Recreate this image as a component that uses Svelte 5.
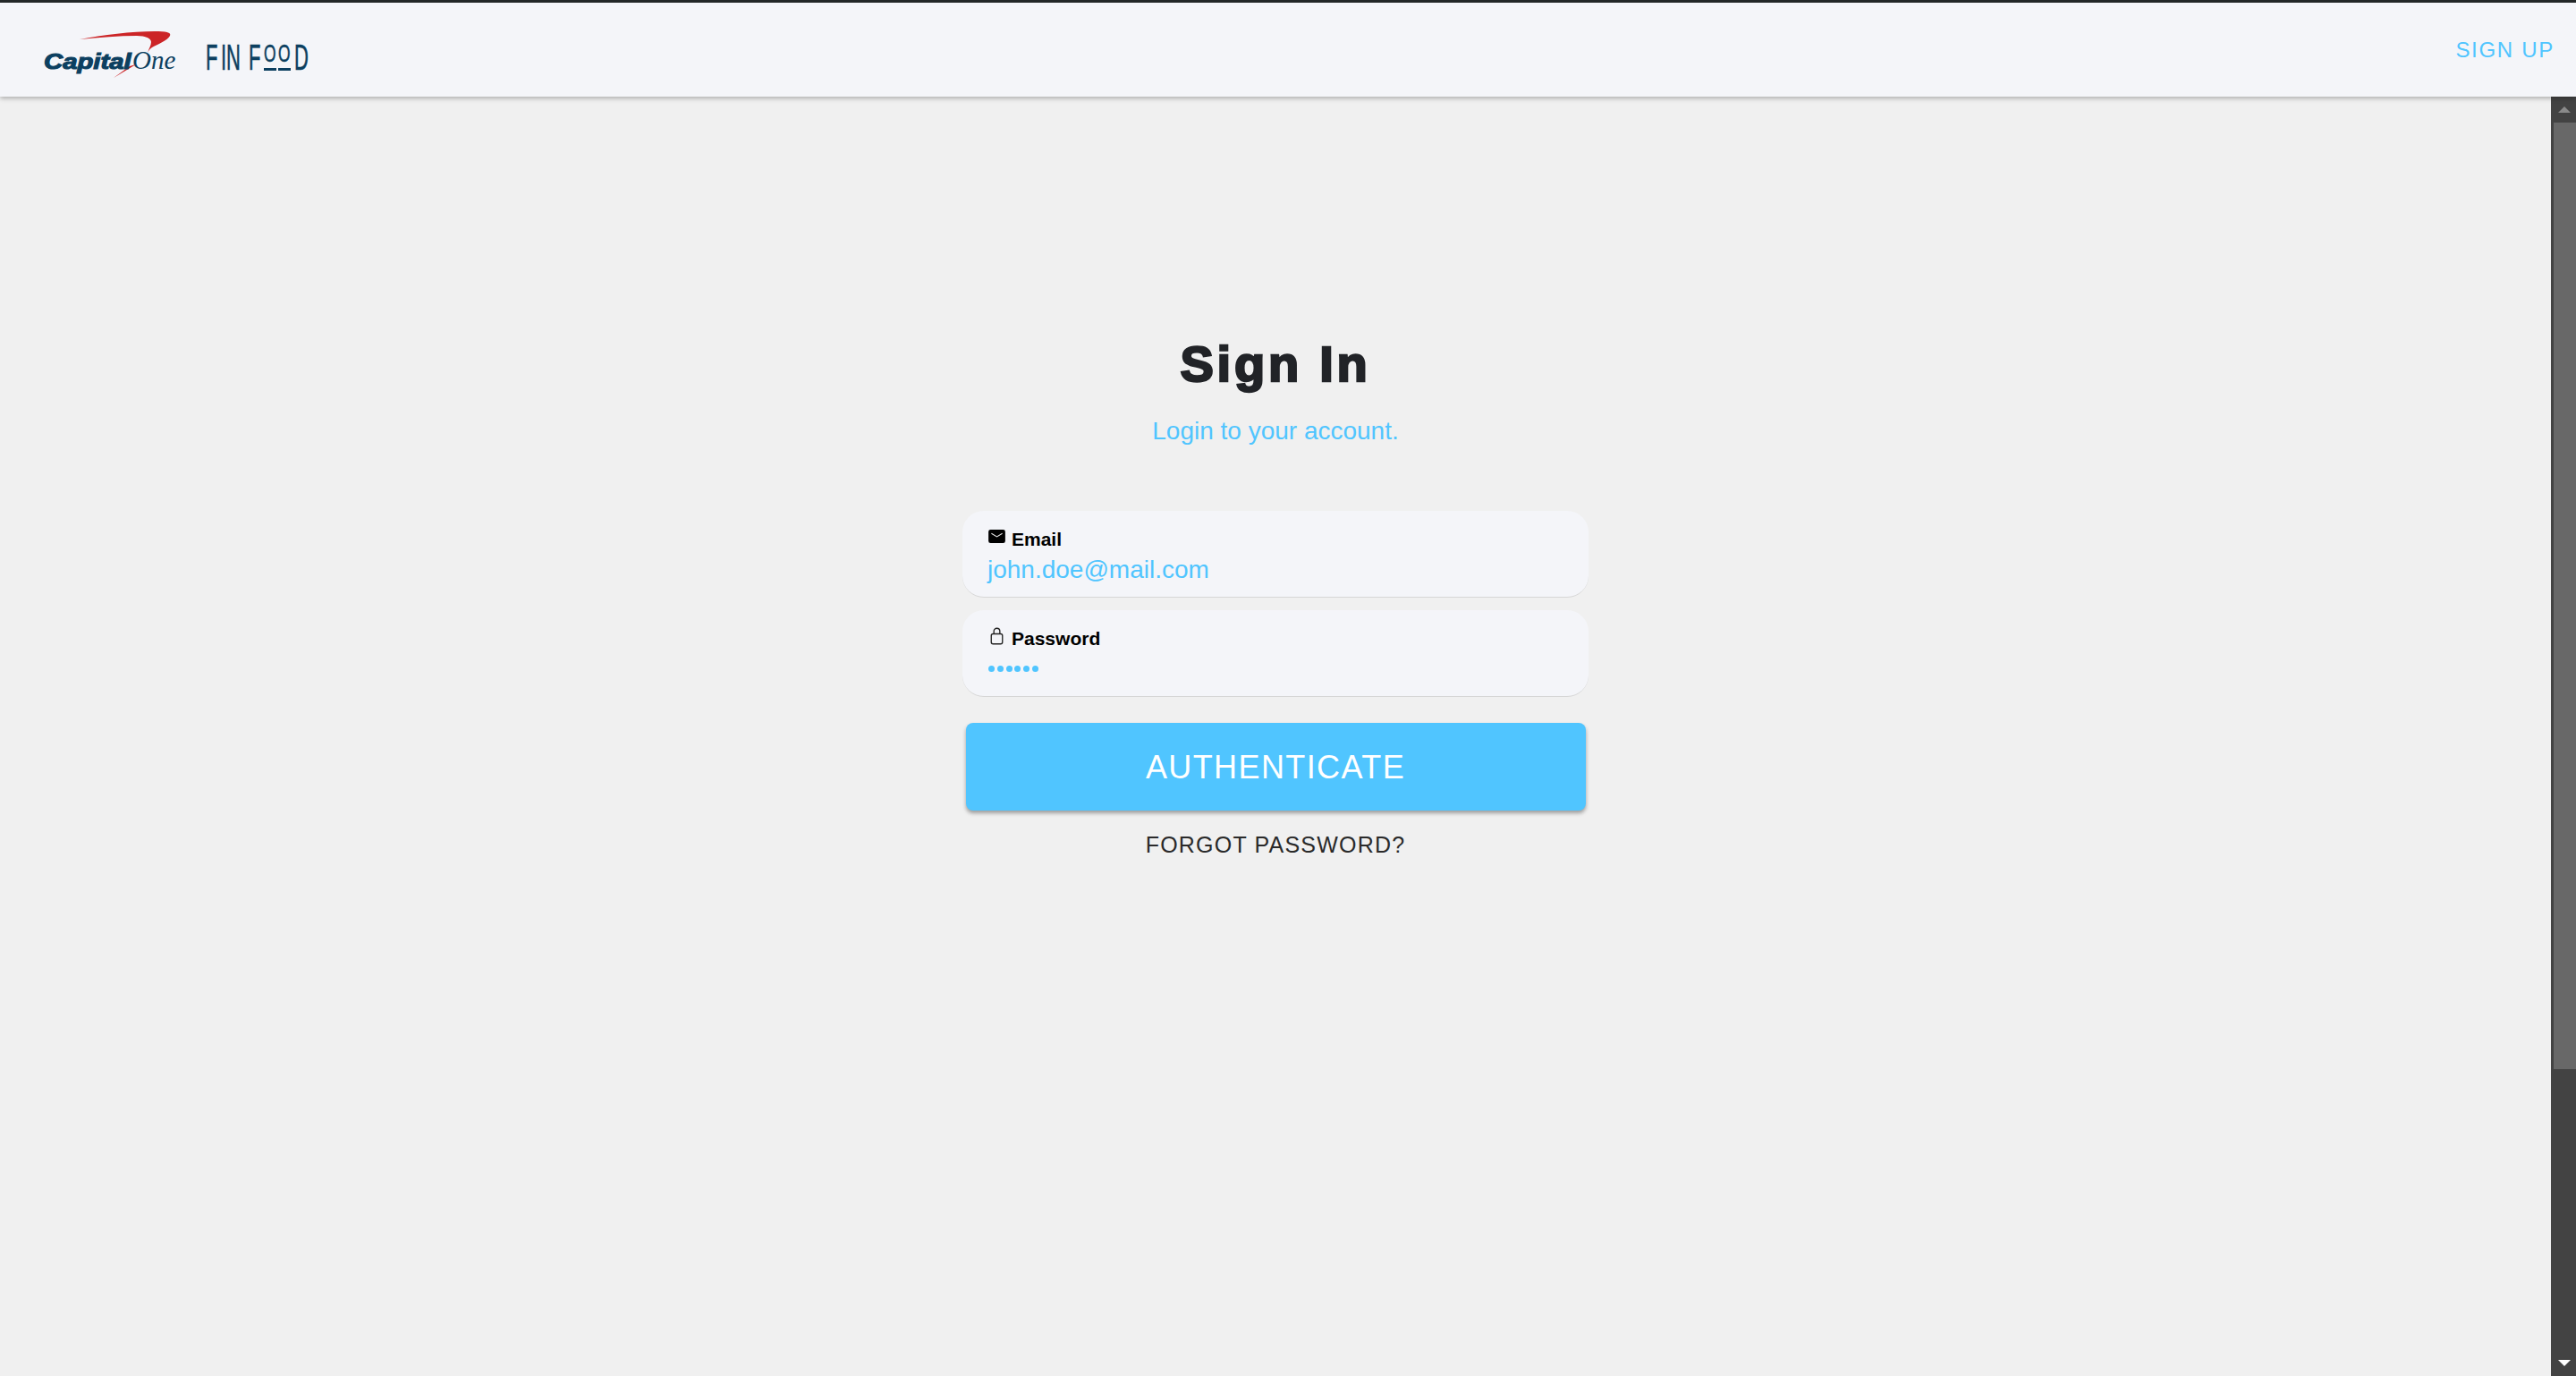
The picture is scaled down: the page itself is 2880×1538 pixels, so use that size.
<script>
  const fields = [
    { label: 'Email', type: 'text', value: 'john.doe@mail.com', icon: 'mail' },
    { label: 'Password', type: 'password', value: '123456', icon: 'lock' }
  ];
</script>

<div class="page">
  <header class="bar">
    <div class="brand">
      <div class="capone">
        <svg class="swoosh" viewBox="0 0 110 56" aria-hidden="true">
          <path d="M4 12 C30 7 62 3 88 3 C100 3 107 4 105 8 C103 13 90 18 85 21 C82 23 81 25 80 27 C81 23 84 19 84 15 C84 11 78 8 68 8 C48 8 26 10 4 12 Z" fill="#cc2427"/>
          <path d="M42 55 L60 42 L67 40 Z" fill="#cc2427"/>
        </svg>
        <span class="cap">Capital</span><span class="one">One</span>
      </div>
      <div class="finfood">
        <span class="l w17">F</span><span class="l w6">I</span><span class="l w25">N</span>
        <span class="l w17">F</span><span class="o"><span>O</span></span><span class="o last"><span>O</span></span><span class="l">D</span>
      </div>
    </div>
    <a class="signup" href="#signup">SIGN UP</a>
  </header>

  <div class="body">
    <main class="content">
      <h1>Sign In</h1>
      <p class="sub">Login to your account.</p>
      <form class="form">
        {#each fields as f}
          <div class="field">
            <div class="label">
              <span class="icbox">
              {#if f.icon === 'mail'}
                <svg viewBox="0 0 20 16" class="ic"><path d="M2.500 0h15A2.500 2.500 0 0 1 20 2.500v11a2.500 2.500 0 0 1-2.500 2.500h-15A2.500 2.500 0 0 1 0 13.500v-11A2.500 2.500 0 0 1 2.500 0Z" fill="#000"/><path d="M3.500 4.500 10 8.500l6.500-4" fill="none" stroke="#e8e8e8" stroke-width="1.100"/></svg>
              {:else}
                <svg viewBox="0 0 20 24" class="ic lock"><rect x="2.500" y="9" width="15" height="13.500" rx="2.500" fill="none" stroke="#222" stroke-width="1.600"/><path d="M6 9V5.500a4 4 0 0 1 8 0V9" fill="none" stroke="#222" stroke-width="1.600"/></svg>
              {/if}
              </span>
              <span>{f.label}</span>
            </div>
            {#if f.type === 'password'}
              <div class="dots">
                {#each f.value as _}<i></i>{/each}
              </div>
            {:else}
              <div class="value">{f.value}</div>
            {/if}
          </div>
        {/each}
        <button type="button" class="auth">AUTHENTICATE</button>
        <a class="forgot" href="#forgot">FORGOT PASSWORD?</a>
      </form>
    </main>
    <aside class="scroll">
      <div class="arrow up"></div>
      <div class="thumb"></div>
      <div class="rest"></div>
      <div class="arrow down"></div>
    </aside>
  </div>
</div>

<style>
  :global(body) { margin: 0; background: #f0f0f0; }
  .page { height: 1538px; display: flex; flex-direction: column; font-family: "Liberation Sans", Arial, sans-serif; border-top: 3px solid #232728; box-sizing: border-box; overflow: hidden; }
  .bar { height: 105px; flex: none; background: #f4f5f9; display: flex; align-items: center; justify-content: space-between; padding: 0 24px 0 49px; box-sizing: border-box; box-shadow: 0 2px 5px rgba(0,0,0,.28); position: relative; z-index: 1; }
  .brand { display: flex; align-items: center; gap: 34px; }
  .capone { position: relative; width: 147px; height: 61px; box-sizing: border-box; padding-top: 27px; color: #0c3f60; display: flex; align-items: baseline; white-space: nowrap; }
  .swoosh { position: absolute; left: 36px; top: 7px; width: 110px; height: 56px; overflow: visible; }
  .cap { font: italic 700 24px/30px "Liberation Sans", sans-serif; -webkit-text-stroke: 1.100px currentColor; transform: scaleX(1.22); transform-origin: left; width: 99px; flex: none; }
  .one { font: italic 400 29px/30px "Liberation Serif", serif; }
  .finfood { display: flex; align-items: flex-start; height: 29px; margin-top: 18px; color: #0c3f60; font: 400 40px/29px "Liberation Sans", sans-serif; -webkit-text-stroke: .6px currentColor; width: 110px; white-space: nowrap; }
  .l { display: inline-block; width: 14px; height: 29px; flex: none; transform: scaleX(.55); transform-origin: left; }
  .w17 { width: 17px; }
  .w6 { width: 6px; }
  .w25 { width: 25px; }
  .o { display: block; flex: none; width: 14px; margin-right: 2px; font-size: 28px; line-height: 20px; height: 29px; box-sizing: border-box; border-bottom: 3px solid currentColor; }
  .o span { display: block; width: 23px; transform: scaleX(.62); transform-origin: left; }
  .last { margin-right: 4px; }
  .signup { color: #50c5ff; font-size: 24px; letter-spacing: 1.700px; text-decoration: none; }
  .body { flex: 1; display: flex; min-height: 0; }
  .content { flex: 1; display: flex; flex-direction: column; align-items: center; padding-top: 264px; }
  h1 { margin: 0; font-size: 56px; line-height: 70px; font-weight: 700; color: #212327; letter-spacing: 3.800px; -webkit-text-stroke: 2.400px #212327; }
  .sub { margin: 22px 0 0; font-size: 28px; line-height: 36px; color: #50c5ff; }
  .form { margin-top: 71px; width: 700px; display: flex; flex-direction: column; align-items: center; }
  .field { width: 100%; height: 97px; box-sizing: border-box; background: #f4f5f9; border-radius: 24px; border-bottom: 1px solid #d6d6d6; padding: 18px 28px 0; margin-bottom: 14px; }
  .label { display: flex; align-items: center; gap: 7px; height: 28px; font-size: 21px; font-weight: 700; color: #000; }
  .icbox { width: 20px; display: flex; justify-content: center; }
  .ic { width: 19px; height: 15px; margin-top: -7px; }
  .lock { height: 20px; width: 17px; }
  .value { color: #50c5ff; font-size: 28px; line-height: 36px; margin-top: 2px; }
  .dots { display: flex; gap: 2.800px; margin-top: 16px; padding-left: 1px; }
  .dots i { width: 7px; height: 7px; border-radius: 50%; background: #50c5ff; }
  .auth { width: 693px; height: 98px; margin-top: 15px; padding-top: 3px; background: #50c5ff; border: 0; border-radius: 8px; color: #fff; font: 400 36px "Liberation Sans", sans-serif; letter-spacing: 1.400px; box-shadow: 0 3px 4px rgba(0,0,0,.35); }
  .forgot { margin-top: 23px; font-size: 25px; line-height: 30px; letter-spacing: 1.200px; color: #2a2a2a; text-decoration: none; }
  .scroll { width: 28px; flex: none; background: #434343; display: flex; flex-direction: column; align-items: center; padding-left: 2px; box-sizing: border-box; }
  .arrow { height: 29px; flex: none; width: 100%; display: flex; align-items: center; justify-content: center; }
  .arrow::before { content: ""; border-left: 7px solid transparent; border-right: 7px solid transparent; }
  .up::before { border-bottom: 7px solid #8a8a8a; }
  .down::before { border-top: 7px solid #fff; }
  .thumb { width: 25px; height: 1058px; flex: none; background: #686868; }
  .rest { flex: 1; }
</style>
